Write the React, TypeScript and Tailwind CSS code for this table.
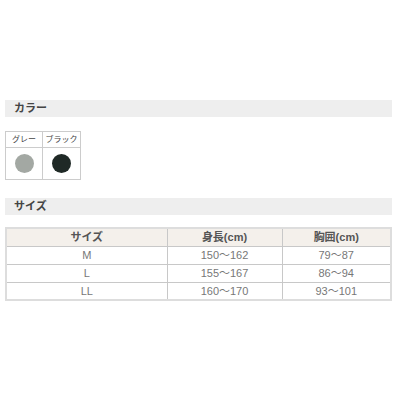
import React from "react";

const font = { fontFamily: '"Liberation Sans", "Noto Sans CJK JP", sans-serif' };

export default function App() {
  const rows = [
    ["M", "150～162", "79～87"],
    ["L", "155～167", "86～94"],
    ["LL", "160～170", "93～101"],
  ];
  return (
    <div className="w-[400px] h-[400px] bg-white pt-[100px] pl-[5px]" style={font}>
      <div className="w-[387px]">
        <div className="h-[17px] bg-[#eeeeee] flex items-center pl-[9px] text-[11px] font-bold text-[#444]">
          カラー
        </div>
        <table className="mt-[14px] border-collapse border border-[#cccccc] text-[#444]">
          <tbody>
            <tr className="h-[16px]">
              <td className="w-[37px] border border-[#cccccc] text-center text-[8px] p-0">グレー</td>
              <td className="w-[38px] border border-[#cccccc] text-center text-[8px] p-0">ブラック</td>
            </tr>
            <tr className="h-[32px]">
              <td className="border border-[#cccccc] p-0">
                <div className="mx-auto w-[19px] h-[19px] rounded-full bg-[#a3a8a3]" />
              </td>
              <td className="border border-[#cccccc] p-0">
                <div className="mx-auto w-[19px] h-[19px] rounded-full bg-[#1f2926]" />
              </td>
            </tr>
          </tbody>
        </table>
        <div className="mt-[18px] h-[17px] bg-[#eeeeee] flex items-center pl-[9px] text-[11px] font-bold text-[#444]">
          サイズ
        </div>
        <table className="mt-[12px] w-[387px] border-collapse border-2 border-[#dddddd] text-[11px] text-[#777]">
          <tbody>
            <tr className="h-[18px] bg-[#f4f0eb]">
              <td className="w-[161px] border border-[#c8c8c8] text-center font-bold text-[#555] p-0">サイズ</td>
              <td className="w-[115px] border border-[#c8c8c8] text-center font-bold text-[#555] p-0">身長(cm)</td>
              <td className="border border-[#c8c8c8] text-center font-bold text-[#555] p-0">胸囲(cm)</td>
            </tr>
            {rows.map((r) => (
              <tr key={r[0]} className="h-[18px]">
                {r.map((c, i) => (
                  <td key={i} className="border border-[#c8c8c8] text-center p-0">{c}</td>
                ))}
              </tr>
            ))}
          </tbody>
        </table>
      </div>
    </div>
  );
}
